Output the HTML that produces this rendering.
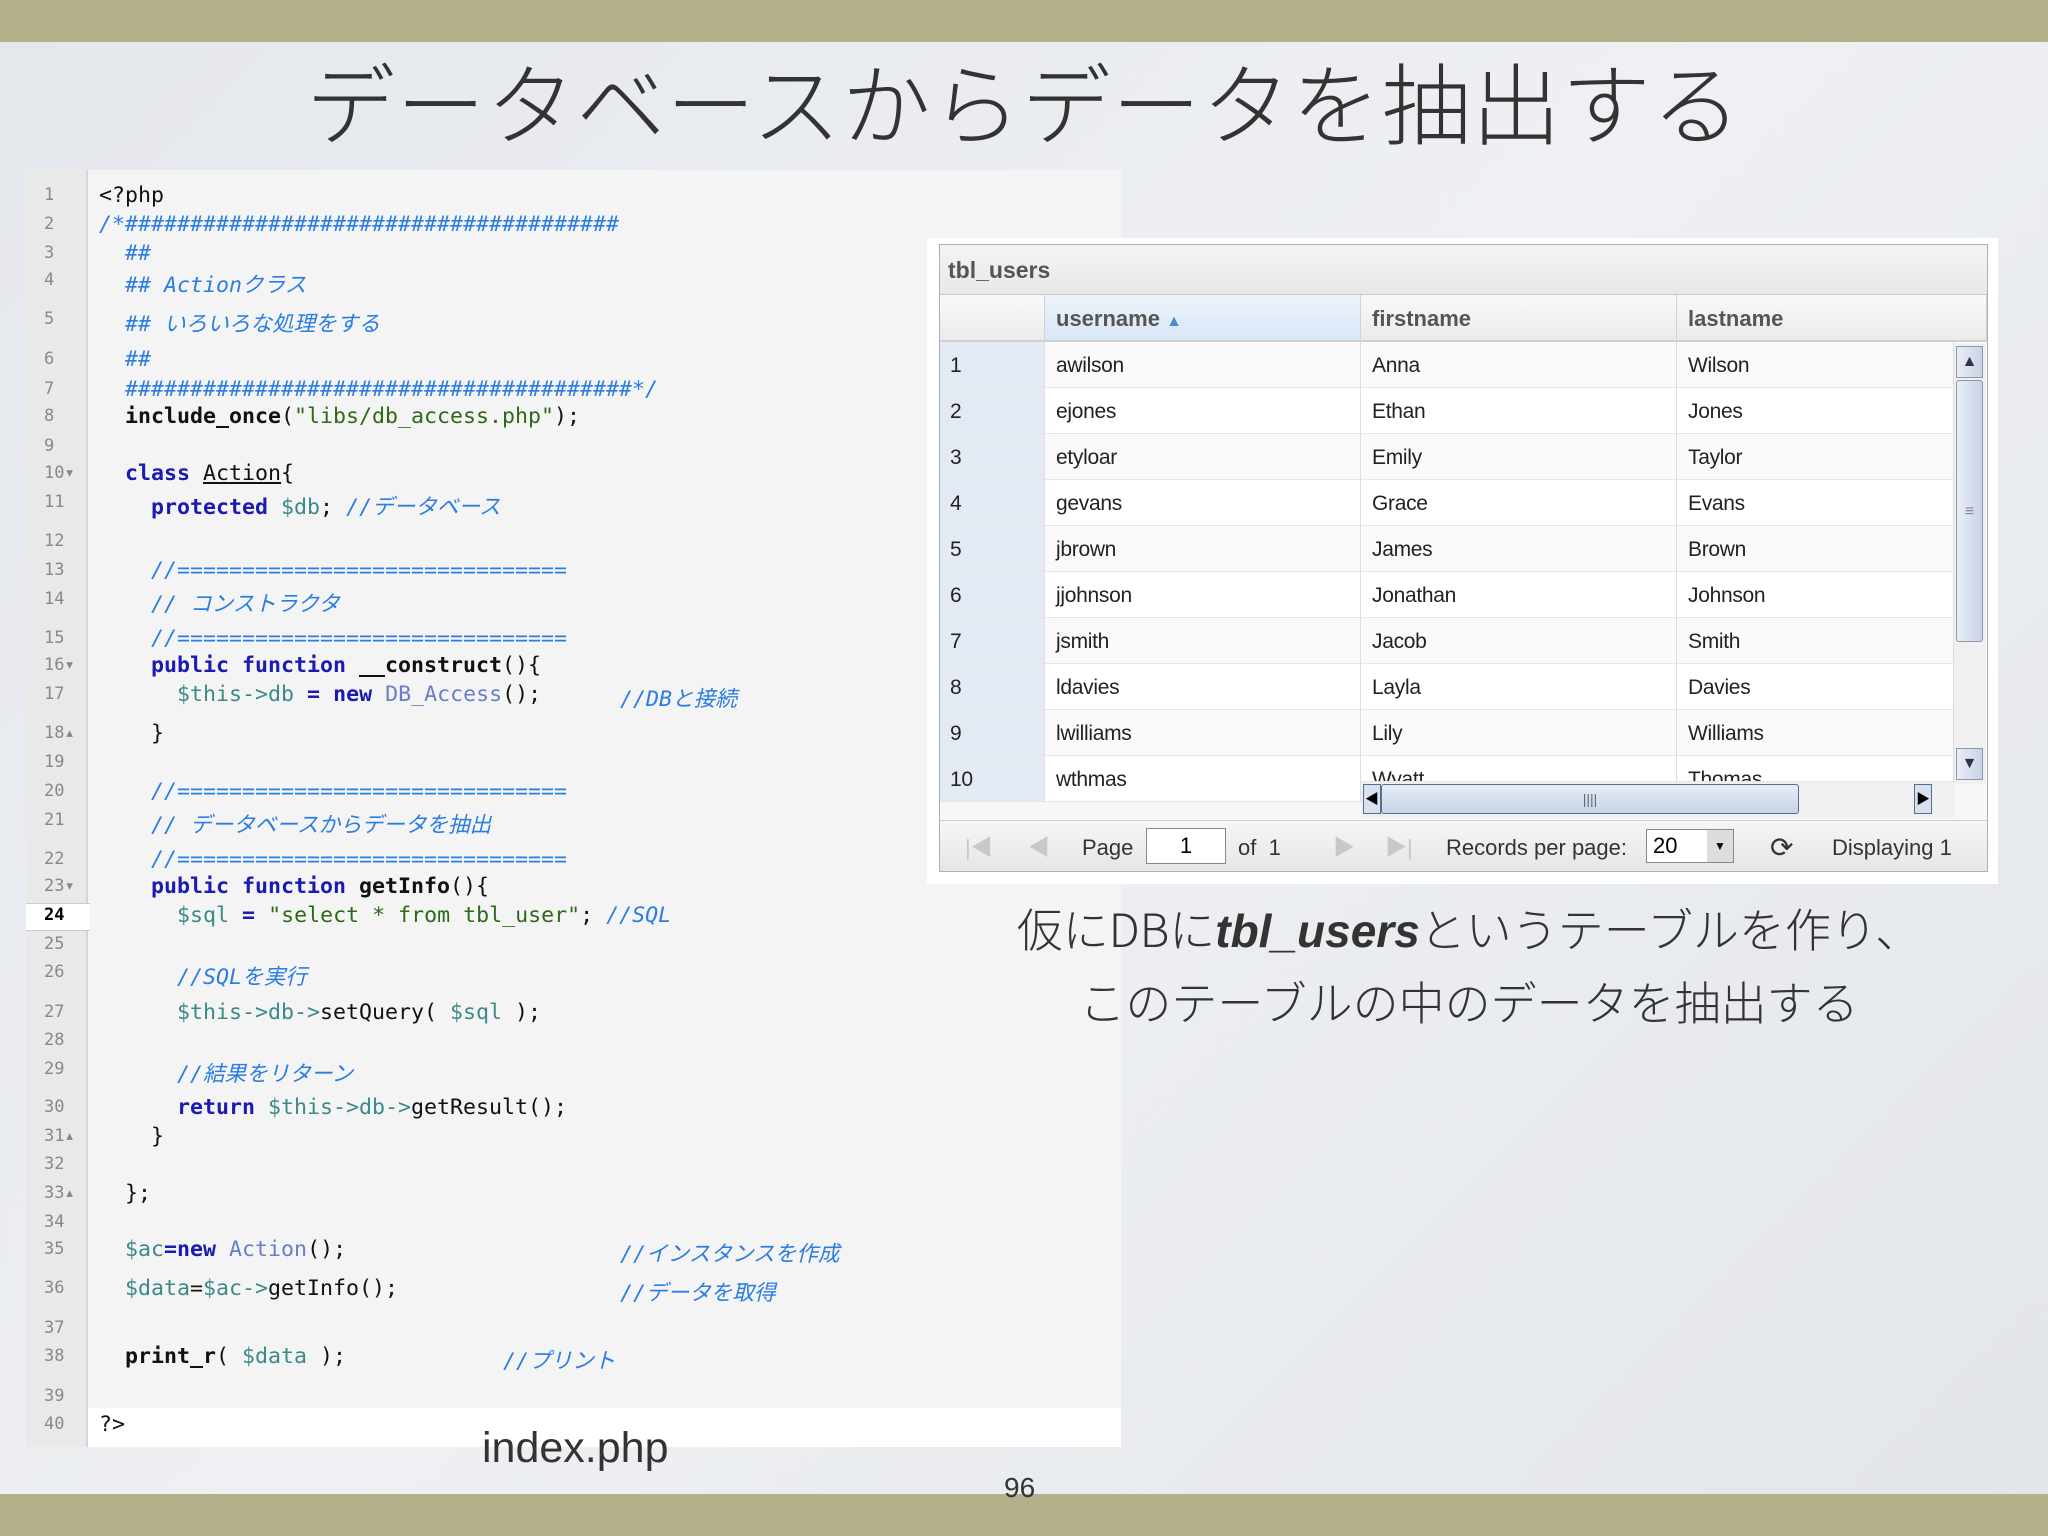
<!DOCTYPE html>
<html><head><meta charset="utf-8"><style>
*{margin:0;padding:0;box-sizing:border-box}
body{width:2048px;height:1536px;position:relative;overflow:hidden;background:linear-gradient(135deg,#e4e7ec 0%,#eef0f3 50%,#e2e5ea 100%);font-family:"Liberation Sans","Noto Sans CJK JP",sans-serif}
.band{position:absolute;left:0;width:2048px;background:#b3b08b}
.title{position:absolute;left:0;width:2048px;top:44px;text-align:center;font-size:89px;color:#333;font-weight:300;letter-spacing:1px;font-family:"Noto Sans CJK JP",sans-serif;line-height:112px}
#code{position:absolute;left:26px;top:170px;width:1095px;height:1277px;background:#f4f4f5}
#gut{position:absolute;left:26px;top:170px;width:62px;height:1277px;background:#e9e9ea;border-right:2px solid #d6d6d8}
.ln{position:absolute;left:26px;width:62px;height:28px;line-height:28px;font:17px "DejaVu Sans Mono",monospace;color:#888;padding-left:18px;transform:translateY(6px)}
.cl{position:absolute;height:28px;line-height:28px;font:21.6px "DejaVu Sans Mono","Noto Sans CJK JP",monospace;color:#111;white-space:pre;transform:translateY(4px)}
.c{color:#2a7de1;font-style:italic}
.k{color:#1b1bb0;font-weight:bold}
.v{color:#3b8a8a}
.s{color:#2d6a17}
.b{font-weight:bold}
.cls{color:#6a7ec8}
#grid{position:absolute;left:927px;top:238px;width:1071px;height:646px;background:#fff}
#gi{position:absolute;left:939px;top:244px;width:1049px;height:628px;border:1px solid #a9b0b8;background:#f7f7f7}
.th{position:absolute;top:295px;height:47px;line-height:47px;font-weight:bold;font-size:22px;color:#555;padding-left:11px;border-right:1px solid #d2d2d2;background:linear-gradient(#f9f9f9,#ebebeb);border-bottom:2px solid #d0d0d0}
.td{position:absolute;height:46px;line-height:48px;font-size:21px;color:#222;padding-left:11px;border-right:1px solid #ddd;border-bottom:1px solid #e6e6e6;background:#fafafa;overflow:hidden;letter-spacing:-0.3px}
.rn{background:#e4eaf4;padding-left:10px}
.cap{position:absolute;left:0;width:2938px;text-align:center;font-size:46px;color:#333;font-family:"Noto Sans CJK JP",sans-serif;font-weight:300}
.tb{position:absolute;top:828px;height:40px;line-height:40px;font-size:22px;color:#333}
</style></head><body>
<div class="band" style="top:0;height:42px"></div>
<div class="band" style="top:1494px;height:42px"></div>
<div class="title">データベースからデータを抽出する</div>

<div id="code"></div>
<div style="position:absolute;left:88px;top:1408px;width:1033px;height:39px;background:#fff"></div>
<div id="gut"></div>
<div style="position:absolute;left:26px;top:903px;width:64px;height:28px;background:#fff;border-top:1px solid #ccc;border-bottom:1px solid #ccc"></div>

<div class="ln" style="top:179px">1</div><div class="ln" style="top:208px">2</div><div class="ln" style="top:237px">3</div><div class="ln" style="top:264px">4</div><div class="ln" style="top:303px">5</div><div class="ln" style="top:343px">6</div><div class="ln" style="top:373px">7</div><div class="ln" style="top:400px">8</div><div class="ln" style="top:430px">9</div><div class="ln" style="top:457px">10▾</div><div class="ln" style="top:486px">11</div><div class="ln" style="top:525px">12</div><div class="ln" style="top:554px">13</div><div class="ln" style="top:583px">14</div><div class="ln" style="top:622px">15</div><div class="ln" style="top:649px">16▾</div><div class="ln" style="top:678px">17</div><div class="ln" style="top:717px">18▴</div><div class="ln" style="top:746px">19</div><div class="ln" style="top:775px">20</div><div class="ln" style="top:804px">21</div><div class="ln" style="top:843px">22</div><div class="ln" style="top:870px">23▾</div><div class="ln" style="top:899px;color:#000;font-weight:bold">24</div><div class="ln" style="top:928px">25</div><div class="ln" style="top:956px">26</div><div class="ln" style="top:996px">27</div><div class="ln" style="top:1024px">28</div><div class="ln" style="top:1053px">29</div><div class="ln" style="top:1091px">30</div><div class="ln" style="top:1120px">31▴</div><div class="ln" style="top:1148px">32</div><div class="ln" style="top:1177px">33▴</div><div class="ln" style="top:1206px">34</div><div class="ln" style="top:1233px">35</div><div class="ln" style="top:1272px">36</div><div class="ln" style="top:1312px">37</div><div class="ln" style="top:1340px">38</div><div class="ln" style="top:1380px">39</div><div class="ln" style="top:1408px">40</div>

<div class="cl" style="left:99px;top:179px">&lt;?php</div>
<div class="cl c" style="left:99px;top:208px">/*######################################</div>
<div class="cl c" style="left:125px;top:237px">##</div>
<div class="cl c" style="left:125px;top:264px">## Actionクラス</div>
<div class="cl c" style="left:125px;top:303px">## いろいろな処理をする</div>
<div class="cl c" style="left:125px;top:343px">##</div>
<div class="cl c" style="left:125px;top:373px">#######################################*/</div>
<div class="cl" style="left:125px;top:400px"><span class="b">include_once</span>(<span class="s">"libs/db_access.php"</span>);</div>
<div class="cl" style="left:125px;top:457px"><span class="k">class</span> <u>Action</u>{</div>
<div class="cl" style="left:151px;top:486px"><span class="k">protected</span> <span class="v">$db</span>; <span class="c">//データベース</span></div>
<div class="cl c" style="left:151px;top:554px">//==============================</div>
<div class="cl c" style="left:151px;top:583px">// コンストラクタ</div>
<div class="cl c" style="left:151px;top:622px">//==============================</div>
<div class="cl" style="left:151px;top:649px"><span class="k">public function</span> <span class="b">__construct</span>(){</div>
<div class="cl" style="left:177px;top:678px"><span class="v">$this-&gt;db</span> <span class="k">=</span> <span class="k">new</span> <span class="cls">DB_Access</span>();</div>
<div class="cl c" style="left:620px;top:678px">//DBと接続</div>
<div class="cl" style="left:151px;top:717px">}</div>
<div class="cl c" style="left:151px;top:775px">//==============================</div>
<div class="cl c" style="left:151px;top:804px">// データベースからデータを抽出</div>
<div class="cl c" style="left:151px;top:843px">//==============================</div>
<div class="cl" style="left:151px;top:870px"><span class="k">public function</span> <span class="b">getInfo</span>(){</div>
<div class="cl" style="left:177px;top:899px"><span class="v">$sql</span> <span class="k">=</span> <span class="s">"select * from tbl_user"</span>; <span class="c">//SQL</span></div>
<div class="cl c" style="left:177px;top:956px">//SQLを実行</div>
<div class="cl" style="left:177px;top:996px"><span class="v">$this-&gt;db-&gt;</span>setQuery( <span class="v">$sql</span> );</div>
<div class="cl c" style="left:177px;top:1053px">//結果をリターン</div>
<div class="cl" style="left:177px;top:1091px"><span class="k">return</span> <span class="v">$this-&gt;db-&gt;</span>getResult();</div>
<div class="cl" style="left:151px;top:1120px">}</div>
<div class="cl" style="left:125px;top:1177px">};</div>
<div class="cl" style="left:125px;top:1233px"><span class="v">$ac</span><span class="k">=new</span> <span class="cls">Action</span>();</div>
<div class="cl c" style="left:620px;top:1233px">//インスタンスを作成</div>
<div class="cl" style="left:125px;top:1272px"><span class="v">$data</span>=<span class="v">$ac-&gt;</span>getInfo();</div>
<div class="cl c" style="left:620px;top:1272px">//データを取得</div>
<div class="cl" style="left:125px;top:1340px"><span class="b">print_r</span>( <span class="v">$data</span> );</div>
<div class="cl c" style="left:503px;top:1340px">//プリント</div>
<div class="cl" style="left:99px;top:1408px">?&gt;</div>

<div style="position:absolute;left:482px;top:1420px;font-size:43px;color:#333;font-weight:300;line-height:56px">index.php</div>
<div style="position:absolute;left:1004px;top:1472px;font-size:28px;color:#333;line-height:32px">96</div>

<div id="grid"></div>
<div id="gi"></div>
<div style="position:absolute;left:940px;top:245px;width:1047px;height:50px;background:linear-gradient(#f4f4f4,#e8e8e8);border-bottom:1px solid #c8c8c8"></div>
<div style="position:absolute;left:948px;top:252px;font-size:23px;font-weight:bold;color:#555;line-height:36px">tbl_users</div>
<div class="th" style="left:940px;width:105px"></div>
<div class="th" style="left:1045px;width:316px;background:linear-gradient(#eef4fc,#d8e6f6)">username <span style="color:#4a8ad8;font-size:16px">▲</span></div>
<div class="th" style="left:1361px;width:316px">firstname</div>
<div class="th" style="left:1677px;width:310px">lastname</div>

<div class="td rn" style="left:940px;top:342px;width:105px">1</div><div class="td" style="left:1045px;top:342px;width:316px">awilson</div><div class="td" style="left:1361px;top:342px;width:316px">Anna</div><div class="td" style="left:1677px;top:342px;width:277px">Wilson</div>
<div class="td rn" style="left:940px;top:388px;width:105px">2</div><div class="td" style="left:1045px;top:388px;width:316px;background:#fff">ejones</div><div class="td" style="left:1361px;top:388px;width:316px;background:#fff">Ethan</div><div class="td" style="left:1677px;top:388px;width:277px;background:#fff">Jones</div>
<div class="td rn" style="left:940px;top:434px;width:105px">3</div><div class="td" style="left:1045px;top:434px;width:316px">etyloar</div><div class="td" style="left:1361px;top:434px;width:316px">Emily</div><div class="td" style="left:1677px;top:434px;width:277px">Taylor</div>
<div class="td rn" style="left:940px;top:480px;width:105px">4</div><div class="td" style="left:1045px;top:480px;width:316px;background:#fff">gevans</div><div class="td" style="left:1361px;top:480px;width:316px;background:#fff">Grace</div><div class="td" style="left:1677px;top:480px;width:277px;background:#fff">Evans</div>
<div class="td rn" style="left:940px;top:526px;width:105px">5</div><div class="td" style="left:1045px;top:526px;width:316px">jbrown</div><div class="td" style="left:1361px;top:526px;width:316px">James</div><div class="td" style="left:1677px;top:526px;width:277px">Brown</div>
<div class="td rn" style="left:940px;top:572px;width:105px">6</div><div class="td" style="left:1045px;top:572px;width:316px;background:#fff">jjohnson</div><div class="td" style="left:1361px;top:572px;width:316px;background:#fff">Jonathan</div><div class="td" style="left:1677px;top:572px;width:277px;background:#fff">Johnson</div>
<div class="td rn" style="left:940px;top:618px;width:105px">7</div><div class="td" style="left:1045px;top:618px;width:316px">jsmith</div><div class="td" style="left:1361px;top:618px;width:316px">Jacob</div><div class="td" style="left:1677px;top:618px;width:277px">Smith</div>
<div class="td rn" style="left:940px;top:664px;width:105px">8</div><div class="td" style="left:1045px;top:664px;width:316px;background:#fff">ldavies</div><div class="td" style="left:1361px;top:664px;width:316px;background:#fff">Layla</div><div class="td" style="left:1677px;top:664px;width:277px;background:#fff">Davies</div>
<div class="td rn" style="left:940px;top:710px;width:105px">9</div><div class="td" style="left:1045px;top:710px;width:316px">lwilliams</div><div class="td" style="left:1361px;top:710px;width:316px">Lily</div><div class="td" style="left:1677px;top:710px;width:277px">Williams</div>
<div class="td rn" style="left:940px;top:756px;width:105px">10</div><div class="td" style="left:1045px;top:756px;width:316px;background:#fff">wthmas</div><div class="td" style="left:1361px;top:756px;width:316px;height:26px;background:#fff">Wyatt</div><div class="td" style="left:1677px;top:756px;width:277px;height:26px;background:#fff">Thomas</div>
<!-- vertical scrollbar -->
<div style="position:absolute;left:1954px;top:344px;width:31px;height:440px;background:#f0f0f0"></div>
<div style="position:absolute;left:1956px;top:346px;width:27px;height:32px;border:1px solid #8a98b0;background:linear-gradient(90deg,#e8eef6,#c8d4e4);text-align:center;font-size:16px;color:#334;line-height:30px">▲</div>
<div style="position:absolute;left:1956px;top:380px;width:27px;height:262px;border:1px solid #8a98b0;border-radius:3px;background:linear-gradient(90deg,#e8eef6,#c8d4e4);text-align:center;line-height:262px;color:#889">≡</div>
<div style="position:absolute;left:1956px;top:748px;width:27px;height:32px;border:1px solid #8a98b0;background:linear-gradient(90deg,#e8eef6,#c8d4e4);text-align:center;font-size:16px;color:#334;line-height:30px">▼</div>
<!-- horizontal scrollbar -->
<div style="position:absolute;left:1361px;top:782px;width:593px;height:36px;background:#f0f0f0"></div>
<div style="position:absolute;left:1363px;top:784px;width:18px;height:30px;border:1px solid #5a6a90;background:#d8e2ee;font-size:14px;line-height:28px;text-align:center">◀</div>
<div style="position:absolute;left:1381px;top:784px;width:418px;height:30px;border:1px solid #5a6a90;border-radius:3px;background:linear-gradient(#e6edf6,#c6d4e6);text-align:center;line-height:28px;color:#667;font-size:14px">||||</div>
<div style="position:absolute;left:1914px;top:784px;width:18px;height:30px;border:1px solid #5a6a90;background:#d8e2ee;font-size:14px;line-height:28px;text-align:center">▶</div>
<!-- toolbar -->
<div style="position:absolute;left:940px;top:820px;width:1047px;height:51px;background:linear-gradient(#f6f6f6,#e6e6e6);border-top:1px solid #d0d0d0"></div>
<div class="tb" style="left:965px;color:#c8c8c8">|◀</div>
<div class="tb" style="left:1028px;color:#c8c8c8">◀</div>
<div class="tb" style="left:1082px">Page</div>
<div style="position:absolute;left:1146px;top:828px;width:80px;height:36px;border:1px solid #888;background:#fff;font-size:22px;line-height:34px;text-align:center">1</div>
<div class="tb" style="left:1238px">of &nbsp;1</div>
<div class="tb" style="left:1333px;color:#c8c8c8">▶</div>
<div class="tb" style="left:1385px;color:#c8c8c8">▶|</div>
<div class="tb" style="left:1446px">Records per page:</div>
<div style="position:absolute;left:1646px;top:829px;width:88px;height:34px;border:1px solid #888;background:#fff;font-size:22px;line-height:32px;padding-left:6px">20<span style="position:absolute;right:0;top:0;width:26px;height:32px;background:#ddd;font-size:12px;text-align:center">▼</span></div>
<div class="tb" style="left:1770px;font-size:28px">⟳</div>
<div class="tb" style="left:1832px">Displaying 1</div>

<div class="cap" style="top:893px;line-height:70px">仮にDBに<b style="font-style:italic;font-family:'Liberation Sans',sans-serif;font-weight:bold">tbl_users</b>というテーブルを作り、</div>
<div class="cap" style="top:966px;line-height:70px">このテーブルの中のデータを抽出する</div>
</body></html>
